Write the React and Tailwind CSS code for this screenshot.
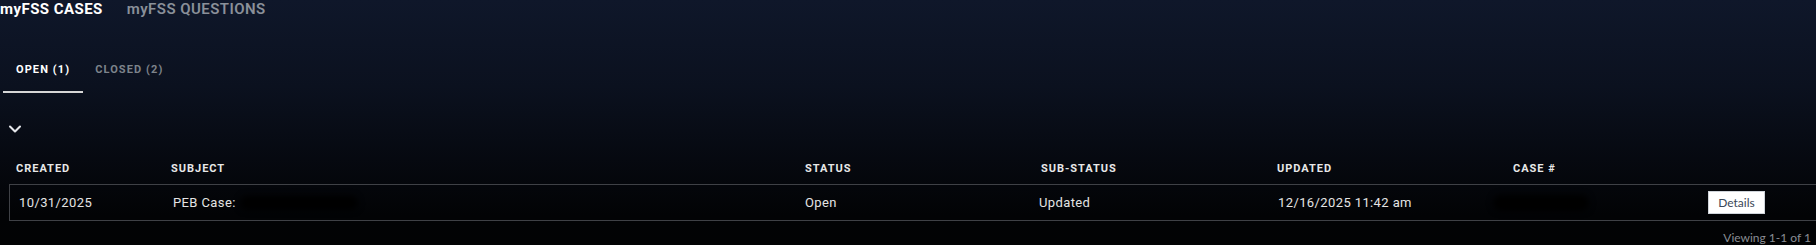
import React, { useState } from 'react';
import { ChevronDown } from 'lucide-react';

const headFont = { fontFamily: 'Roboto, "Liberation Sans", sans-serif' };

const columns = ['CREATED', 'SUBJECT', 'STATUS', 'SUB-STATUS', 'UPDATED', 'CASE #'];

const App = () => {
  const [tab, setTab] = useState('open');

  return (
    <div
      className="h-[245px] w-full overflow-hidden bg-[linear-gradient(180deg,#0f172a_0%,#0b111f_35%,#060910_65%,#020305_88%,#020304_100%)] text-white"
      style={headFont}
    >
      {/* Top nav */}
      <nav className="flex items-center gap-[24px] h-[18px] text-[15px] font-bold tracking-[0.03em] leading-[18px]">
        <span className="text-white">myFSS CASES</span>
        <span className="text-[#8a9099] font-semibold">myFSS QUESTIONS</span>
      </nav>

      {/* Tabs */}
      <div className="mt-[44px] ml-[3px] flex text-[11px] font-bold tracking-[0.1em] leading-4">
        <button
          onClick={() => setTab('open')}
          className={`px-[13px] pb-[13px] border-b-2 ${tab === 'open' ? 'border-[#d6d6d6] text-white' : 'border-transparent text-[#7d838b]'}`}
        >
          OPEN (1)
        </button>
        <button
          onClick={() => setTab('closed')}
          className={`px-[12px] pb-[13px] border-b-2 ${tab === 'closed' ? 'border-[#d6d6d6] text-white' : 'border-transparent text-[#7d838b]'}`}
        >
          CLOSED (2)
        </button>
      </div>

      {/* Collapse toggle */}
      <div className="mt-[26px] ml-[5px] h-5">
        <ChevronDown size={20} strokeWidth={2.5} className="text-[#e5e7eb]" />
      </div>

      {/* Table header */}
      <div className="mt-[22px] pl-[16px] grid grid-cols-[155px_634px_236px_236px_236px_1fr] text-[11px] font-bold tracking-[0.09em] leading-4 text-[#e8e8e8]">
        {columns.map((c) => (
          <div key={c}>{c}</div>
        ))}
      </div>

      {/* Row */}
      <div className="mt-[7px] ml-[9px] w-[1830px] h-[37px] border border-[#3f4146] pl-[9px] grid grid-cols-[154px_632px_234px_239px_235px_195px_1fr] items-center text-[13px] tracking-[0.03em] text-[#e4e4e4]">
        <div>10/31/2025</div>
        <div className="flex items-center">
          <span>PEB Case:</span>
          <span className="ml-1 inline-block h-[14px] w-[118px] rounded-full bg-black blur-[3px]" />
        </div>
        <div>Open</div>
        <div>Updated</div>
        <div>12/16/2025 11:42 am</div>
        <div className="flex items-center">
          <span className="-ml-[20px] inline-block h-[16px] w-[96px] rounded-full bg-black blur-[3px]" />
        </div>
        <div>
          <button
            className="h-[23px] w-[57px] bg-white border border-[#cfd4da] text-[12px] text-[#3a4757] tracking-normal"
            style={{ fontFamily: 'Lato, "Liberation Sans", sans-serif' }}
          >
            Details
          </button>
        </div>
      </div>

      {/* Footer count */}
      <div
        className="mt-[9px] pr-[5px] text-right text-[12px] leading-4 text-[#8a8e94]"
        style={{ fontFamily: 'Lato, "Liberation Sans", sans-serif' }}
      >
        Viewing 1-1 of 1
      </div>
    </div>
  );
};

export default App;
